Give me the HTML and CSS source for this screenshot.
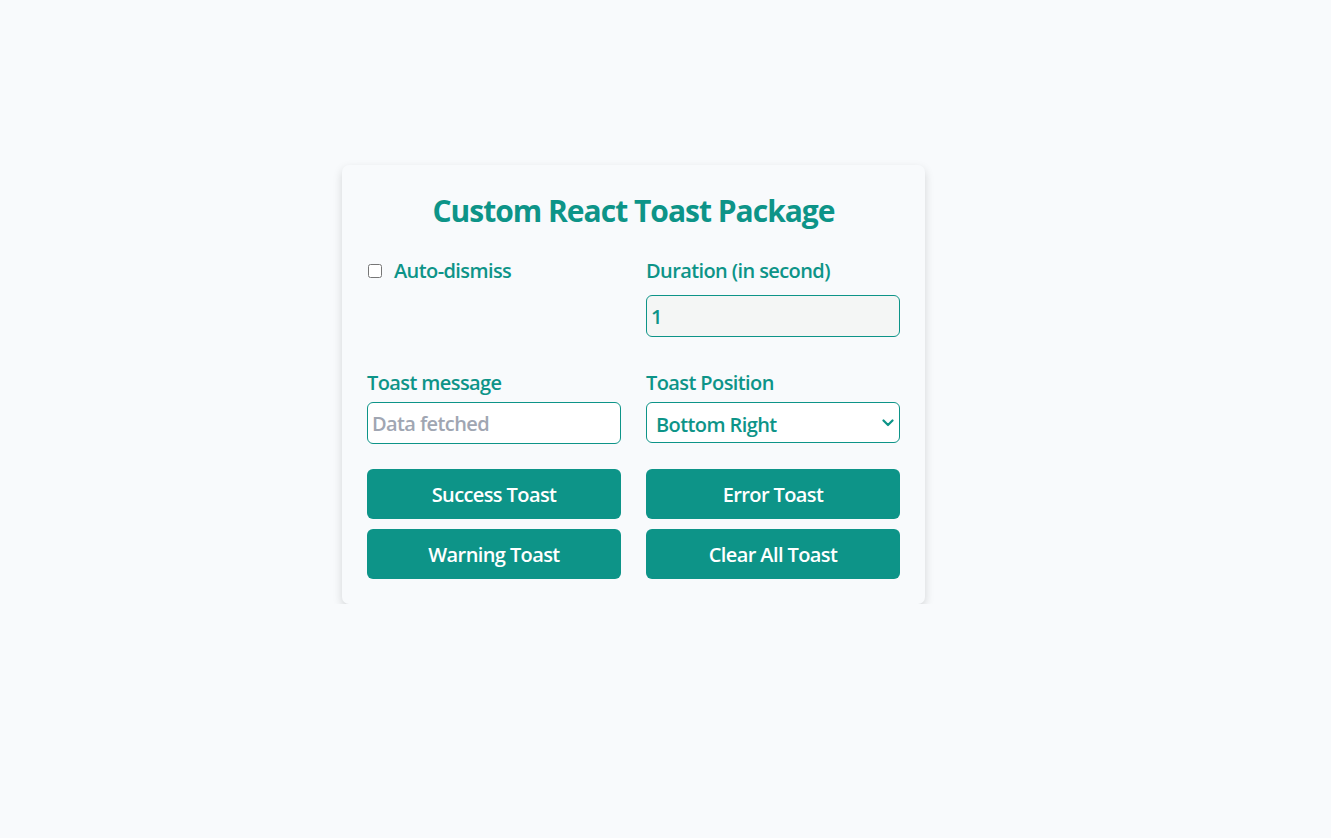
FILE: index.html
```html
<!DOCTYPE html>
<html lang="en">
<head>
<meta charset="utf-8">
<title>Custom React Toast Package</title>
<link rel="stylesheet" href="styles.css">
</head>
<body>
<main class="page">
  <section class="card">
    <h1 class="title">Custom React Toast Package</h1>
    <div class="grid">
      <div class="field field-top">
        <label class="check-label"><input type="checkbox" class="check"> <span>Auto-dismiss</span></label>
      </div>
      <div class="field field-top">
        <label class="label" for="dur">Duration (in second)</label>
        <input id="dur" class="input input-grey" type="number" value="1">
      </div>
      <div class="field">
        <label class="label" for="msg">Toast message</label>
        <input id="msg" class="input" type="text" placeholder="Data fetched">
      </div>
      <div class="field">
        <label class="label" for="pos">Toast Position</label>
        <div class="select-wrap">
          <select id="pos" class="input select">
            <option>Bottom Right</option>
            <option>Bottom Left</option>
            <option>Top Right</option>
            <option>Top Left</option>
          </select>
          <svg class="chev" width="12" height="8" viewBox="0 0 12 8"><path d="M1.5 1.5 L6 6 L10.5 1.5" fill="none" stroke="#0d9488" stroke-width="2.2" stroke-linecap="round" stroke-linejoin="round"/></svg>
        </div>
      </div>
    </div>
    <div class="buttons">
      <button class="btn">Success Toast</button>
      <button class="btn">Error Toast</button>
      <button class="btn">Warning Toast</button>
      <button class="btn">Clear All Toast</button>
    </div>
  </section>
</main>
</body>
</html>
```
FILE: styles.css
```css
* { box-sizing: border-box; }
html, body { margin: 0; padding: 0; }
body {
  background: #f8fafc;
  font-family: "Open Sans", "Noto Sans", sans-serif;
  color: #0d9488;
}
.page {
  display: flex;
  justify-content: flex-start;
  padding-top: 165px;
  padding-left: 342px;
}
.card {
  width: 583px;
  padding: 25px;
  background: #f8fafc;
  border-radius: 7px;
  box-shadow: 0 4px 10px rgba(0, 0, 0, 0.15);
}
.title {
  margin: 0 0 25px;
  text-align: center;
  font-size: 30px;
  line-height: 42px;
  letter-spacing: -1px;
  font-weight: 700;
  color: #0d9488;
}
.grid {
  display: grid;
  grid-template-columns: 1fr 1fr;
  column-gap: 25px;
  row-gap: 32px;
}
.field { display: flex; flex-direction: column; gap: 6px; }
.field-top { gap: 11px; }
.label, .check-label {
  font-size: 20px;
  line-height: 27px;
  letter-spacing: -0.6px;
  font-weight: 600;
  color: #0d9488;
}
.check-label { display: flex; align-items: center; gap: 12px; }
.check {
  margin: 0 0 0 1px;
  width: 14px;
  height: 14px;
}
.input {
  height: 42px;
  width: 100%;
  border: 1px solid #0d9488;
  border-radius: 6px;
  background: #ffffff;
  padding: 1px 4px 0;
  font-family: inherit;
  font-size: 20px;
  letter-spacing: -0.6px;
  font-weight: 600;
  color: #0d9488;
  outline: none;
}
.input-grey { background: #f4f6f5; }
.input::placeholder { color: #a0a6b2; }
input[type=number]::-webkit-inner-spin-button { -webkit-appearance: none; margin: 0; }
.select-wrap { position: relative; }
.select {
  -webkit-appearance: none;
  appearance: none;
  padding: 3px 9px 0;
  height: 41px;
}
.chev {
  position: absolute;
  right: 6px;
  top: 17px;
  pointer-events: none;
}
.buttons {
  margin-top: 25px;
  display: grid;
  grid-template-columns: 1fr 1fr;
  column-gap: 25px;
  row-gap: 10px;
}
.btn {
  height: 50px;
  border: none;
  border-radius: 6px;
  background: #0d9488;
  color: #ffffff;
  font-family: inherit;
  font-size: 20px;
  letter-spacing: -0.6px;
  font-weight: 600;
  cursor: pointer;
}
```
